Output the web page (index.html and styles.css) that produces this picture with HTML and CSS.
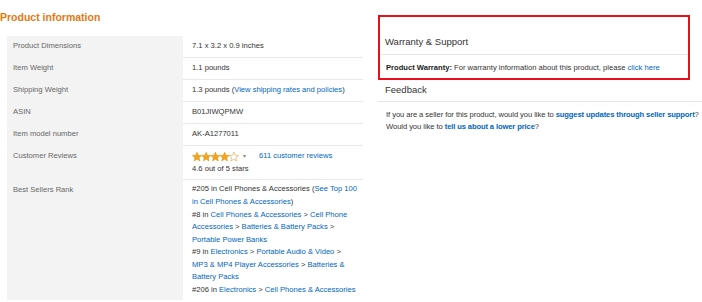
FILE: index.html
```html
<!DOCTYPE html>
<html>
<head>
<meta charset="utf-8">
<link rel="stylesheet" href="styles.css">
</head>
<body>
<div class="page">
  <div class="left">
    <h2 class="title">Product information</h2>
    <div class="specs">
      <div class="lbl">Product Dimensions</div><div class="val">7.1 x 3.2 x 0.9 inches</div>
      <div class="lbl">Item Weight</div><div class="val">1.1 pounds</div>
      <div class="lbl">Shipping Weight</div><div class="val">1.3 pounds (<a href="#">View shipping rates and policies</a>)</div>
      <div class="lbl">ASIN</div><div class="val">B01JIWQPMW</div>
      <div class="lbl">Item model number</div><div class="val">AK-A1277011</div>
      <div class="lbl lbl-rev">Customer Reviews</div>
      <div class="val val-rev">
        <div class="stars-line">
          <svg class="stars" width="47" height="11" viewBox="0 0 47 11">
            <defs>
              <path id="st" d="M5 0.3 L6.35 3.4 L9.7 3.6 L7.15 5.85 L7.95 9.2 L5 7.45 L2.05 9.2 L2.85 5.85 L0.3 3.6 L3.65 3.4 Z"/>
              <clipPath id="half"><rect x="37" y="0" width="5.6" height="11"/></clipPath>
            </defs>
            <use href="#st" x="0" y="0.8" fill="#f4a41a" stroke="#d08a12" stroke-width="0.4"/>
            <use href="#st" x="9.2" y="0.8" fill="#f4a41a" stroke="#d08a12" stroke-width="0.4"/>
            <use href="#st" x="18.4" y="0.8" fill="#f4a41a" stroke="#d08a12" stroke-width="0.4"/>
            <use href="#st" x="27.6" y="0.8" fill="#f4a41a" stroke="#d08a12" stroke-width="0.4"/>
            <use href="#st" x="36.8" y="0.8" fill="#fff" stroke="#d9a040" stroke-width="0.6"/>
            <use href="#st" x="36.8" y="0.8" fill="#f4a41a" clip-path="url(#half)"/>
          </svg>
          <span class="caret">&#9662;</span>
          <a class="rev-link" href="#">611 customer reviews</a>
        </div>
        <div>4.6 out of 5 stars</div>
      </div>
      <div class="lbl">Best Sellers Rank</div>
      <div class="val val-rank">
        <div>#205 in Cell Phones &amp; Accessories (<a href="#">See Top 100 in Cell Phones &amp; Accessories</a>)</div>
        <div>#8 in <a href="#">Cell Phones &amp; Accessories</a> &gt; <a href="#">Cell Phone Accessories</a> &gt; <a href="#">Batteries &amp; Battery Packs</a> &gt; <a href="#">Portable Power Banks</a></div>
        <div>#9 in <a href="#">Electronics</a> &gt; <a href="#">Portable Audio &amp; Video</a> &gt; <a href="#">MP3 &amp; MP4 Player Accessories</a> &gt; <a href="#">Batteries &amp; Battery Packs</a></div>
        <div>#206 in <a href="#">Electronics</a> &gt; <a href="#">Cell Phones &amp; Accessories</a></div>
      </div>
    </div>
  </div>
  <div class="right">
    <div class="highlight">
      <h3 class="sec-head">Warranty &amp; Support</h3>
      <p class="sec-body"><b>Product Warranty:</b> For warranty information about this product, please <a href="#">click here</a></p>
    </div>
    <h3 class="sec-head fb-head">Feedback</h3>
    <div class="sec-body fb-body">
      <p class="fb-line">If you are a seller for this product, would you like to <a class="strong" href="#">suggest updates through seller support</a>?</p>
      <p class="fb-line">Would you like to <a class="strong" href="#">tell us about a lower price</a>?</p>
    </div>
  </div>
</div>
</body>
</html>
```
FILE: styles.css
```css
* { box-sizing: border-box; }
html, body { margin: 0; padding: 0; background: #fff; }
body {
  font-family: "Liberation Sans", Arial, sans-serif;
  font-size: 7.6px;
  line-height: 12.5px;
  color: #333;
}
a { color: #0066c0; text-decoration: none; }
.page { display: flex; align-items: flex-start; }
.left { width: 363px; flex: none; }
.title {
  margin: 0;
  padding: 10px 0 0 0;
  height: 36px;
  font-size: 10.5px;
  line-height: 14px;
  font-weight: bold;
  color: #e47911;
}
.specs {
  margin-left: 7px;
  display: grid;
  grid-template-columns: 176px 180px;
  background: #f3f3f3;
}
.lbl {
  padding: 4px 6px 4.5px 6px;
  color: #666;
  border-bottom: 1px solid #f3f3f3;
}
.val {
  background: #fff;
  padding: 4px 6px 4.5px 9px;
  border-bottom: 1px solid #e9e9e9;
  color: #333;
}
.val-rev { padding-top: 3px; padding-bottom: 3px; }
.lbl-rev { padding-top: 3.5px; }
.stars-line { display: flex; align-items: center; height: 14px; }
.stars { display: block; }
.caret { color: #888; font-size: 6px; margin-left: 4px; }
.rev-link { margin-left: 13px; }
.val-rank { line-height: 12.5px; border-bottom: none; padding-top: 3.5px; padding-bottom: 4px; }
.val-rank > div:first-child { margin-bottom: 0.5px; }
.right { flex: 1; margin-left: 15px; margin-top: 15px; min-width: 0; }
.highlight {
  width: 312px;
  border: 2px solid #e8101c;
}
.sec-head {
  margin: 0;
  font-weight: normal;
  font-size: 9.5px;
  line-height: 14px;
  color: #333;
  padding: 18px 5px 5px 5px;
  border-bottom: 1px solid #e7e7e7;
}
.sec-body {
  margin: 0;
  padding: 6.5px 6px 4px 6px;
  color: #333;
}
.sec-body b { color: #222; }
.fb-head { padding: 3px 5px 4px 7px; }
.fb-body { padding: 6.5px 0 0 8px; letter-spacing: -0.06px; }
.fb-line { margin: 0; white-space: nowrap; }
.strong { font-weight: bold; letter-spacing: -0.12px; }
```
